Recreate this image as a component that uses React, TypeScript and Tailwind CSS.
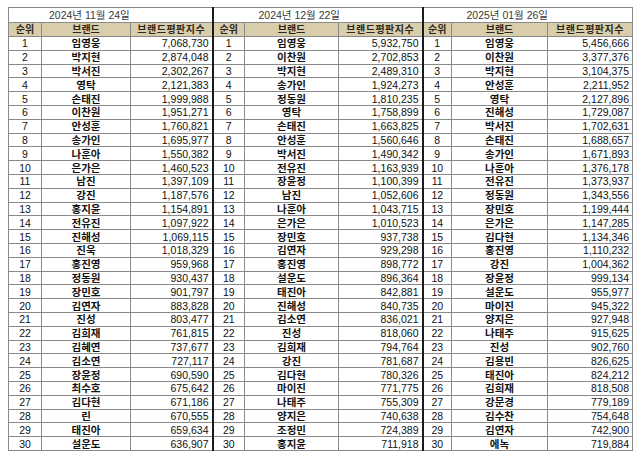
import React from "react"

type Entry = [string, string]

const sections: { date: string; pad: string; widths: [string, string, string]; rows: Entry[] }[] = [
  {
    date: "2024년 11월 24일",
    pad: "pl-[40px]",
    widths: ["w-[33px]", "w-[89px]", "w-[82px]"],
    rows: [
      ["임영웅", "7,068,730"], ["박지현", "2,874,048"], ["박서진", "2,302,267"], ["영탁", "2,121,383"],
      ["손태진", "1,999,988"], ["이찬원", "1,951,271"], ["안성훈", "1,760,821"], ["송가인", "1,695,977"],
      ["나훈아", "1,550,382"], ["은가은", "1,460,523"], ["남진", "1,397,109"], ["강진", "1,187,576"],
      ["홍지윤", "1,154,891"], ["전유진", "1,097,922"], ["진해성", "1,069,115"], ["진욱", "1,018,329"],
      ["홍진영", "959,968"], ["정동원", "930,437"], ["장민호", "901,797"], ["김연자", "883,828"],
      ["진성", "803,477"], ["김희재", "761,815"], ["김혜연", "737,677"], ["김소연", "727,117"],
      ["장윤정", "690,590"], ["최수호", "675,642"], ["김다현", "671,186"], ["린", "670,555"],
      ["태진아", "659,634"], ["설운도", "636,907"],
    ],
  },
  {
    date: "2024년 12월 22일",
    pad: "pl-[45px]",
    widths: ["w-[32px]", "w-[94px]", "w-[84px]"],
    rows: [
      ["임영웅", "5,932,750"], ["이찬원", "2,702,853"], ["박지현", "2,489,310"], ["송가인", "1,924,273"],
      ["정동원", "1,810,235"], ["영탁", "1,758,899"], ["손태진", "1,663,825"], ["안성훈", "1,560,646"],
      ["박서진", "1,490,342"], ["전유진", "1,163,939"], ["장윤정", "1,100,399"], ["남진", "1,052,606"],
      ["나훈아", "1,043,715"], ["은가은", "1,010,523"], ["장민호", "937,738"], ["김연자", "929,298"],
      ["홍진영", "898,772"], ["설운도", "896,364"], ["태진아", "842,881"], ["진해성", "840,735"],
      ["김소연", "836,021"], ["진성", "818,060"], ["김희재", "794,764"], ["강진", "781,687"],
      ["김다현", "780,326"], ["마이진", "771,775"], ["나태주", "755,309"], ["양지은", "740,638"],
      ["조정민", "724,389"], ["홍지윤", "711,918"],
    ],
  },
  {
    date: "2025년 01월 26일",
    pad: "pl-[43px]",
    widths: ["w-[29px]", "w-[96px]", "w-[85px]"],
    rows: [
      ["임영웅", "5,456,666"], ["이찬원", "3,377,376"], ["박지현", "3,104,375"], ["안성훈", "2,211,952"],
      ["영탁", "2,127,896"], ["진해성", "1,729,087"], ["박서진", "1,702,631"], ["손태진", "1,688,657"],
      ["송가인", "1,671,893"], ["나훈아", "1,376,178"], ["전유진", "1,373,937"], ["정동원", "1,343,556"],
      ["장민호", "1,199,444"], ["은가은", "1,147,285"], ["김다현", "1,134,346"], ["홍진영", "1,110,232"],
      ["강진", "1,004,362"], ["장윤정", "999,134"], ["설운도", "955,977"], ["마이진", "945,322"],
      ["양지은", "927,948"], ["나태주", "915,625"], ["진성", "902,760"], ["김용빈", "826,625"],
      ["태진아", "824,212"], ["김희재", "818,508"], ["강문경", "779,189"], ["김수찬", "754,648"],
      ["김연자", "742,900"], ["에녹", "719,884"],
    ],
  },
]

const cell = "border border-[#8a8a8a] p-0 leading-[12px]"
const sep = "border-l-2 border-l-[#1a1a1a]"

export default function App() {
  return (
    <div
      className="min-h-screen bg-white pl-[8px] pt-[7px] text-[10.5px] text-[#111]"
      style={{ fontFamily: '"Liberation Sans", "Noto Sans CJK KR", sans-serif' }}
    >
      <table className="table-fixed border-collapse border border-[#111]">
        <colgroup>
          {sections.map((s) => s.widths.map((w, i) => <col key={s.date + i} className={w} />))}
        </colgroup>
        <thead>
          {/* date row */}
          <tr className="h-[15px]">
            {sections.map((s, i) => (
              <td
                key={s.date}
                colSpan={3}
                className={`${cell} ${s.pad} text-left text-[#3a3a3a] ${i > 0 ? sep : ""}`}
              >
                {s.date}
              </td>
            ))}
          </tr>
          {/* column headers */}
          <tr className="h-[14px] bg-[#d8ceac] text-[10px] text-[#2d2619]">
            {sections.map((s, i) => (
              <React.Fragment key={s.date}>
                <th className={`${cell} font-semibold text-center ${i > 0 ? sep : ""}`}>순위</th>
                <th className={`${cell} font-semibold text-center`}>브랜드</th>
                <th className={`${cell} font-semibold text-center tracking-[0.5px]`}>브랜드평판지수</th>
              </React.Fragment>
            ))}
          </tr>
        </thead>
        <tbody>
          {Array.from({ length: 30 }, (_, r) => (
            <tr key={r} className="h-[13.8px]">
              {sections.map((s, i) => (
                <React.Fragment key={s.date}>
                  <td className={`${cell} text-center ${i > 0 ? sep : ""}`}>{r + 1}</td>
                  <td className={`${cell} text-center font-bold`}>{s.rows[r][0]}</td>
                  <td className={`${cell} pr-[3px] text-right`}>{s.rows[r][1]}</td>
                </React.Fragment>
              ))}
            </tr>
          ))}
        </tbody>
      </table>
    </div>
  )
}
